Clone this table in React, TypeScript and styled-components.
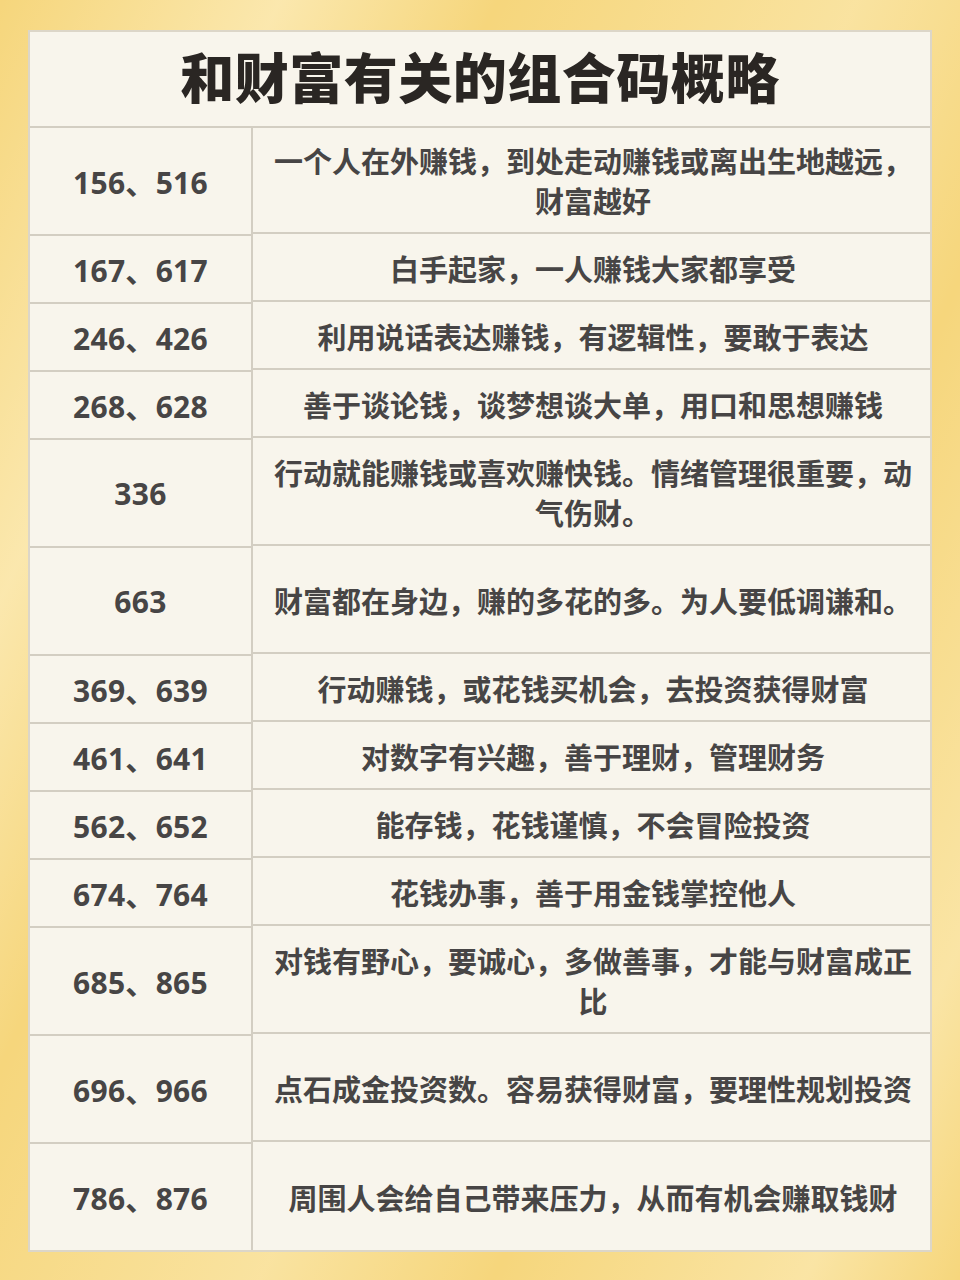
import React from 'react';
import styled, { createGlobalStyle } from 'styled-components';

const GlobalStyle = createGlobalStyle`
  html, body {
    margin: 0;
    padding: 0;
  }
  body {
    width: 960px;
    height: 1280px;
    overflow: hidden;
    font-family: "Noto Sans", "Noto Sans CJK SC", sans-serif;
    background:
      linear-gradient(115deg,
        rgba(255, 246, 214, 0) 0%,
        rgba(255, 246, 214, 0.55) 18%,
        rgba(255, 246, 214, 0) 32%,
        rgba(255, 246, 214, 0.4) 55%,
        rgba(255, 246, 214, 0) 70%,
        rgba(255, 246, 214, 0.45) 90%,
        rgba(255, 246, 214, 0) 100%
      ),
      #f6d67c;
  }
`;

const Page = styled.div`
  padding: 30px 28px 0 28px;
  box-sizing: border-box;
  width: 960px;
  height: 1280px;
`;

const Table = styled.div`
  width: 904px;
  background: #f8f5ec;
  border: 2px solid #dcd6c8;
  box-sizing: border-box;
  display: grid;
  grid-template-columns: 223px 1fr;
`;

const Title = styled.h1`
  grid-column: 1 / 3;
  margin: 0;
  height: 96px;
  padding-bottom: 8px;
  box-sizing: border-box;
  display: flex;
  align-items: center;
  justify-content: center;
  font-family: "Noto Sans CJK SC", sans-serif;
  font-weight: 900;
  font-size: 54px;
  letter-spacing: 0.5px;
  color: #2a2623;
  border-bottom: 2px solid #d3cec2;
`;

const CodeCell = styled.div<{ $tall: boolean; $last: boolean }>`
  height: ${p => (p.$tall ? 106 : 66)}px;
  display: flex;
  align-items: center;
  justify-content: center;
  border-right: 2px solid #d3cec2;
  border-bottom: ${p => (p.$last ? 'none' : '2px solid #d3cec2')};
  font-family: "Noto Sans", "Noto Sans CJK SC", sans-serif;
  font-weight: 700;
  font-size: 30px;
  letter-spacing: 0.3px;
  color: #474545;
`;

const TextCell = styled.div<{ $tall: boolean; $last: boolean }>`
  height: ${p => (p.$tall ? 106 : 66)}px;
  display: flex;
  align-items: center;
  justify-content: center;
  text-align: center;
  padding: 0 12px 0 15px;
  box-sizing: border-box;
  border-bottom: ${p => (p.$last ? 'none' : '2px solid #d3cec2')};
  font-family: "Noto Sans CJK SC", sans-serif;
  font-weight: 700;
  font-size: 29px;
  line-height: 40px;
  color: #474545;
`;

const rows = [
  { code: '156、516', text: '一个人在外赚钱，到处走动赚钱或离出生地越远，财富越好', tall: true },
  { code: '167、617', text: '白手起家，一人赚钱大家都享受', tall: false },
  { code: '246、426', text: '利用说话表达赚钱，有逻辑性，要敢于表达', tall: false },
  { code: '268、628', text: '善于谈论钱，谈梦想谈大单，用口和思想赚钱', tall: false },
  { code: '336', text: '行动就能赚钱或喜欢赚快钱。情绪管理很重要，动气伤财。', tall: true },
  { code: '663', text: '财富都在身边，赚的多花的多。为人要低调谦和。', tall: true },
  { code: '369、639', text: '行动赚钱，或花钱买机会，去投资获得财富', tall: false },
  { code: '461、641', text: '对数字有兴趣，善于理财，管理财务', tall: false },
  { code: '562、652', text: '能存钱，花钱谨慎，不会冒险投资', tall: false },
  { code: '674、764', text: '花钱办事，善于用金钱掌控他人', tall: false },
  { code: '685、865', text: '对钱有野心，要诚心，多做善事，才能与财富成正比', tall: true },
  { code: '696、966', text: '点石成金投资数。容易获得财富，要理性规划投资', tall: true },
  { code: '786、876', text: '周围人会给自己带来压力，从而有机会赚取钱财', tall: true },
];

const App: React.FC = () => {
  return (
    <Page>
      <GlobalStyle />
      <Table>
        <Title>和财富有关的组合码概略</Title>
        {rows.map((row, i) => {
          const last = i === rows.length - 1;
          return (
            <React.Fragment key={row.code}>
              <CodeCell $tall={row.tall} $last={last}>{row.code}</CodeCell>
              <TextCell $tall={row.tall} $last={last}>{row.text}</TextCell>
            </React.Fragment>
          );
        })}
      </Table>
    </Page>
  );
};

export default App;
